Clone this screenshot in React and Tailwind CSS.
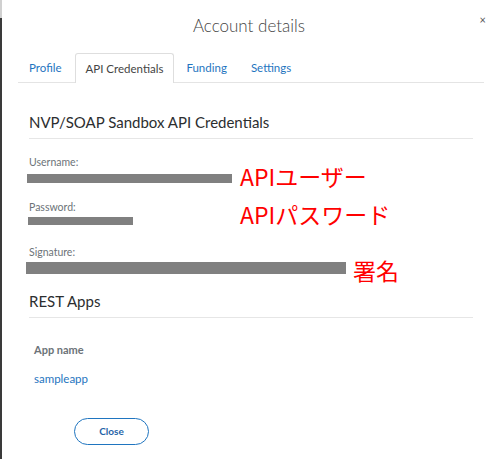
import React from 'react';

const jp = { fontFamily: '"Noto Sans CJK JP", "Noto Sans", sans-serif' };

const Field = ({ label, barClass, note, noteClass, className }) => (
  <div className={`relative flex flex-col ${className}`}>
    <span className="text-[10.5px] leading-[12px] text-[#6c7378]">{label}</span>
    <div className={`bg-[#808080] ${barClass}`} />
    {note && (
      <span className={`absolute text-[#ff0000] text-[23px] leading-[24px] whitespace-nowrap ${noteClass}`} style={jp}>
        {note}
      </span>
    )}
  </div>
);

export default function App() {
  return (
    <div
      className="w-[500px] h-[459px] bg-white flex overflow-hidden text-[#2c2e2f]"
      style={{ fontFamily: 'Lato, "Open Sans", sans-serif' }}
    >
      <div className="w-[2px] flex flex-col shrink-0">
        <div className="h-[18px] bg-[#d0d0d0]" />
        <div className="flex-1 bg-[#3a3a3a]" />
      </div>

      <div className="flex-1 flex flex-col relative">
        <span className="absolute right-[14px] top-[12px] text-[11px] text-[#555]">×</span>

        <h1 className="text-center text-[17px] font-light text-[#444] pt-[15px] leading-[22px] pr-[4px]">
          Account details
        </h1>

        <div className="mx-[16px] mt-[16px] flex items-end border-b border-[#e4e4e4] h-[30px] text-[11.5px] leading-[14px]">
          <div className="px-[11px] pb-[7px] text-[#1f75c0]">Profile</div>
          <div className="ml-[2px] pl-[10px] pr-[10px] pb-[7px] border border-b-0 border-[#dedede] rounded-t-[3px] text-[#444] bg-white mb-[-1px] h-[30px] flex items-end">
            API Credentials
          </div>
          <div className="px-[12px] pb-[7px] text-[#1f75c0]">Funding</div>
          <div className="px-[12px] pb-[7px] text-[#1f75c0]">Settings</div>
        </div>

        <div className="mx-[27px] mt-[29px]">
          <h2 className="text-[15px] leading-[20px] text-[#2c2e2f] pb-[6px] border-b border-[#e6e6e6]">
            NVP/SOAP Sandbox API Credentials
          </h2>

          <Field
            className="mt-[17px]"
            label="Username:"
            barClass="mt-[6px] w-[205px] h-[9px] -ml-[2px]"
            note="APIユーザー"
            noteClass="left-[211px] top-[8px]"
          />
          <Field
            className="mt-[18px]"
            label="Password:"
            barClass="mt-[4px] w-[105px] h-[8px] -ml-[1px]"
            note="APIパスワード"
            noteClass="left-[211px] top-[1px]"
          />
          <Field
            className="mt-[21px]"
            label="Signature:"
            barClass="mt-[4px] w-[320px] h-[12px] -ml-[3px]"
            note="署名"
            noteClass="left-[324px] top-[12px]"
          />

          <h2 className="mt-[17px] text-[15px] leading-[20px] pb-[6px] border-b border-[#e6e6e6]">
            REST Apps
          </h2>

          <div className="px-[5px] mt-[24px] text-[11px] leading-[16px] font-bold text-[#6c7378]">App name</div>
          <div className="px-[5px] mt-[13px] text-[11.5px] leading-[16px] text-[#1f75c0]">sampleapp</div>

          <button className="mt-[31px] ml-[45px] w-[75px] h-[27px] rounded-full border border-[#1f75c0] text-[#1f64a8] text-[10px] font-bold">
            Close
          </button>
        </div>
      </div>
    </div>
  );
}
